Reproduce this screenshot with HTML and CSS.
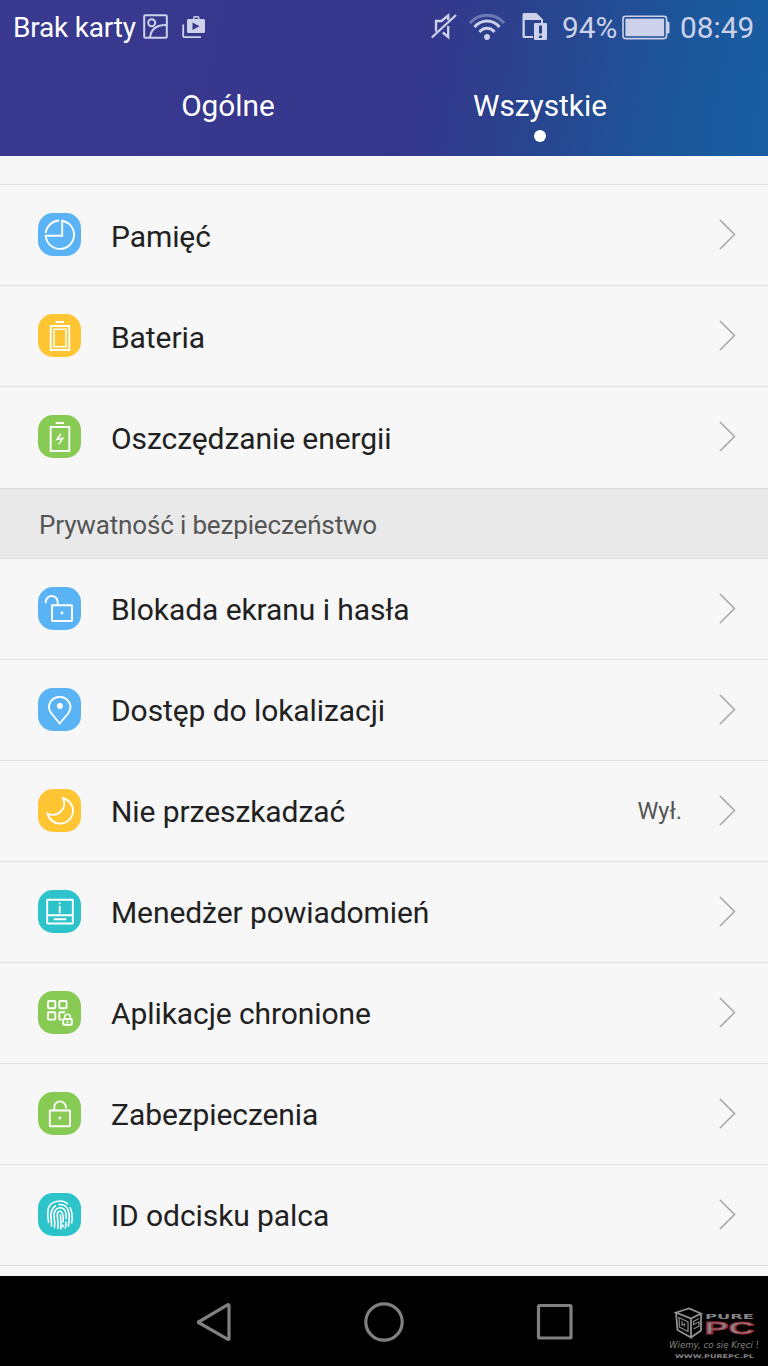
FILE: index.html
```
<!DOCTYPE html>
<html lang="pl">
<head>
    <meta charset="UTF-8">
    <meta name="viewport" content="width=device-width, initial-scale=1.0">
    <title>Ustawienia</title>
    <link rel="stylesheet" href="styles.css">
</head>
<body>

<header class="header">
    <div class="status">
        <span class="carrier">Brak karty</span>
        <svg class="status-image" width="25" height="25" viewBox="0 0 25 25" fill="none" stroke="currentColor" stroke-width="2">
            <rect x="1.2" y="1.2" width="22.6" height="22.6" rx="1"/>
            <circle cx="8.7" cy="8.8" r="3.5"/>
            <path d="M7 23.5C8 15 14 10.800 23.500 11"/>
        </svg>
        <svg class="status-store" width="24" height="23" viewBox="0 0 24 23">
            <path d="M1.200 8.500V20.300Q1.200 21.200 2.100 21.200H19" fill="none" stroke="currentColor" stroke-width="1.800"/>
            <path fill="currentColor" fill-rule="evenodd" d="M7 3H11V2Q11 0 13 0H15.500Q17.500 0 17.500 2V3H21.500Q23 3 23 4.500V15.500Q23 17 21.500 17H6.500Q5 17 5 15.500V4.500Q5 3 6.500 3ZM12.500 3H16V1.600H12.500ZM10.500 6.500V14L17.500 10.200Z"/>
        </svg>
        <div class="status-right">
            <svg class="status-mute" width="26" height="28" viewBox="0 0 26 28" fill="none" stroke="currentColor" stroke-width="2.300">
                <path d="M5 19.500V9H10.500L17.200 3.500V8M17.200 14V25L11.800 20.500"/>
                <path d="M0.800 25.500L25 3"/>
            </svg>
            <svg class="status-wifi" width="36" height="28" viewBox="0 0 36 28" fill="none" stroke="currentColor" stroke-width="3">
                <path d="M1 11C10 0.500 26 0.500 35 11" opacity="0.400"/>
                <path d="M5.500 15C12.500 7 23.500 7 30.500 15M10.500 20C14.500 15 21.500 15 25.500 20"/>
                <circle cx="18" cy="25" r="2.900" fill="currentColor" stroke="none"/>
            </svg>
            <svg class="status-sim" width="26" height="28" viewBox="0 0 26 28">
                <path fill="currentColor" d="M2 0H14.500L21 6.500V10H19V7H2.800V23H11V25H2Q0.500 25 0.500 23.500V1.500Q0.500 0 2 0Z"/>
                <path fill="currentColor" fill-rule="evenodd" d="M13 10H24Q25 10 25 11V26Q25 27 24 27H13Q12 27 12 26V11Q12 10 13 10ZM17 12.500V20.500H20V12.500ZM17 22.500V25H20V22.500Z"/>
            </svg>
            <span class="percent">94%</span>
            <svg class="status-battery" width="48" height="25" viewBox="0 0 48 25">
                <rect x="1" y="1.200" width="43.500" height="22.400" rx="2.500" fill="none" stroke="currentColor" stroke-width="1.600"/>
                <rect x="3.400" y="3.600" width="38.700" height="17.600" fill="currentColor"/>
                <path d="M45 6.500H46Q47.500 6.500 47.500 8V17Q47.500 18.500 46 18.500H45Z" fill="currentColor"/>
            </svg>
            <span class="clock">08:49</span>
        </div>
    </div>
    <nav class="tabs">
        <a class="tab">Ogólne</a>
        <a class="tab active">Wszystkie</a>
    </nav>
</header>

<main class="settings">
    <div class="spacer"></div>

    <div class="row">
        <svg class="icon blue" viewBox="0 0 43 43">
            <path d="M24.200 22.800V7.700A14.200 14.200 0 1 1 7.700 22.800Z"/>
            <path d="M7.700 19.800A14.200 14.200 0 0 1 21.200 7.500"/>
        </svg>
        <span class="label">Pamięć</span>
        <svg class="arrow" viewBox="0 0 17 31"><path d="M1 1L15.500 15.500L1 30"/></svg>
    </div>
    <div class="row">
        <svg class="icon yellow" viewBox="0 0 43 43">
            <path d="M17.700 8H26"/>
            <rect x="12.700" y="12" width="18.600" height="24"/>
            <rect class="thin" x="16" y="15.300" width="12" height="17.400"/>
        </svg>
        <span class="label">Bateria</span>
        <svg class="arrow" viewBox="0 0 17 31"><path d="M1 1L15.500 15.500L1 30"/></svg>
    </div>
    <div class="row last">
        <svg class="icon green" viewBox="0 0 43 43">
            <path d="M17.700 8H26"/>
            <rect x="12.700" y="12" width="18.600" height="24"/>
            <path class="thin" d="M23 18.800L19 24.300L24.800 23.200L20.800 29.200"/>
        </svg>
        <span class="label">Oszczędzanie energii</span>
        <svg class="arrow" viewBox="0 0 17 31"><path d="M1 1L15.500 15.500L1 30"/></svg>
    </div>

    <h2 class="section">Prywatność i bezpieczeństwo</h2>

    <div class="row">
        <svg class="icon blue" viewBox="0 0 43 43">
            <path d="M7.700 16.300V15A6 6 0 0 1 19.700 15V18"/>
            <rect x="14" y="18.300" width="20" height="15.700" rx="0.500"/>
            <circle class="dot" cx="24" cy="26" r="1.400"/>
        </svg>
        <span class="label">Blokada ekranu i hasła</span>
        <svg class="arrow" viewBox="0 0 17 31"><path d="M1 1L15.500 15.500L1 30"/></svg>
    </div>
    <div class="row">
        <svg class="icon blue" viewBox="0 0 43 43">
            <path d="M21.700 35.500L13.500 25.500C7.500 17.500 13.500 9 21.700 9S36 17.500 30 25.500Z"/>
            <circle class="dot" cx="21.900" cy="18" r="2.900"/>
        </svg>
        <span class="label">Dostęp do lokalizacji</span>
        <svg class="arrow" viewBox="0 0 17 31"><path d="M1 1L15.500 15.500L1 30"/></svg>
    </div>
    <div class="row">
        <svg class="icon yellow" viewBox="0 0 43 43">
            <path d="M25 9.200A12.900 12.900 0 1 1 9.500 24.600A11.500 11.500 0 0 0 25 9.200Z"/>
        </svg>
        <span class="label">Nie przeszkadzać</span>
        <span class="value">Wył.</span>
        <svg class="arrow" viewBox="0 0 17 31"><path d="M1 1L15.500 15.500L1 30"/></svg>
    </div>
    <div class="row">
        <svg class="icon teal" viewBox="0 0 43 43">
            <rect x="9.200" y="9.700" width="25.600" height="23.800" rx="0.500"/>
            <path d="M9 25.300H35M15.500 29.300H28.300M21.700 16V23.300M21.700 12.500V14.300"/>
        </svg>
        <span class="label">Menedżer powiadomień</span>
        <svg class="arrow" viewBox="0 0 17 31"><path d="M1 1L15.500 15.500L1 30"/></svg>
    </div>
    <div class="row">
        <svg class="icon green" viewBox="0 0 43 43">
            <rect x="10" y="10" width="7.300" height="7.300" rx="1"/>
            <rect x="21.300" y="10" width="7.300" height="7.300" rx="1"/>
            <rect x="10" y="21.300" width="7.300" height="7.300" rx="1"/>
            <path d="M23.500 28.600H22.300Q21.300 28.600 21.300 27.600V22.300Q21.300 21.300 22.300 21.300H27"/>
            <rect x="25.200" y="28" width="8.600" height="5.700" rx="0.800"/>
            <path class="thin" d="M26.700 28V26A2.800 2.800 0 0 1 32.300 26V28"/>
            <circle class="dot" cx="29.500" cy="30.800" r="1.100"/>
        </svg>
        <span class="label">Aplikacje chronione</span>
        <svg class="arrow" viewBox="0 0 17 31"><path d="M1 1L15.500 15.500L1 30"/></svg>
    </div>
    <div class="row">
        <svg class="icon green" viewBox="0 0 43 43">
            <path d="M16.300 18V15.200A5.800 5.800 0 0 1 27.900 15.200V16.500"/>
            <rect x="11.800" y="18.500" width="20.200" height="15.700" rx="0.500"/>
            <circle class="dot" cx="21.900" cy="26" r="1.400"/>
        </svg>
        <span class="label">Zabezpieczenia</span>
        <svg class="arrow" viewBox="0 0 17 31"><path d="M1 1L15.500 15.500L1 30"/></svg>
    </div>
    <div class="row">
        <svg class="icon teal finger" viewBox="0 0 43 43">
            <path d="M10.600 30Q9.500 24 9.800 19C10.200 11 16 8 22 8Q27 8 30 11.300"/>
            <path d="M32 14Q34.500 19 34.200 25Q34.200 28 33.500 30.500"/>
            <path d="M13.300 33.500Q13.800 30 13 25.500Q12.300 20 14.500 16Q16 13.500 18 12.600"/>
            <path d="M20.500 11.600Q27 10.800 29.700 16Q31.300 19.500 31.200 24.500Q31.200 30 30.200 33.800"/>
            <path d="M16.300 35Q17.300 30 16.300 25.500C15 18 18.500 14.800 22 14.800C26 14.800 28 18.500 28.200 23V26"/>
            <path d="M28 28.500Q28 32 27.200 35.500"/>
            <path d="M19.700 36Q20.700 30.500 19.500 25.500C18.700 20.500 19.700 18.200 22 18.200C24.500 18.200 25 22 25.200 25V29.500"/>
            <path d="M22.300 21.500Q23.500 29 22.800 36.300M25 31.500L24.700 34.500"/>
        </svg>
        <span class="label">ID odcisku palca</span>
        <svg class="arrow" viewBox="0 0 17 31"><path d="M1 1L15.500 15.500L1 30"/></svg>
    </div>
</main>

<footer class="navbar">
    <div class="nav-button">
        <svg width="40" height="44" viewBox="0 0 40 44"><path d="M4.500 22L33.500 4.800Q35 4 35 5.500V38.500Q35 40 33.500 39.200L4.500 22.500Z"/></svg>
    </div>
    <div class="nav-button">
        <svg width="44" height="44" viewBox="0 0 44 44"><circle cx="22" cy="22" r="18.200"/></svg>
    </div>
    <div class="nav-button">
        <svg width="44" height="44" viewBox="0 0 44 44"><rect x="6.500" y="5.500" width="32.500" height="32.500" rx="1"/></svg>
    </div>
    <svg class="watermark" width="102" height="62" viewBox="0 0 102 62">
        <path class="box" d="M10 10.500L23 6.500L35 11.500L25 16.500ZM10 10.500L11.500 28L25 35.500V16.500M35 11.500V28.500L25 35.500"/>
        <path class="box-detail" d="M13 15.500L22 20V29.500L13.500 25ZM33 16.500L27.500 19.500V22.500L33 20V24L27.500 27M16 19V23L18.500 22V24.500"/>
        <text class="pure" x="39" y="17.200" textLength="49" lengthAdjust="spacingAndGlyphs">PURE</text>
        <text class="pc" x="38.500" y="32.200" textLength="50" lengthAdjust="spacingAndGlyphs">PC</text>
        <text class="motto" x="3" y="46" textLength="90" lengthAdjust="spacingAndGlyphs">Wiemy, co się Kręci !</text>
        <text class="site" x="9" y="55.700" textLength="79" lengthAdjust="spacingAndGlyphs">WWW.PUREPC.PL</text>
    </svg>
</footer>

</body>
</html>
```
FILE: styles.css
```
* {
    box-sizing: border-box;
}
body {
    font-family: Roboto, sans-serif;
    margin: 0;
    height: 1366px;
    overflow: hidden;
    display: flex;
    flex-direction: column;
    background-color: #f7f7f7;
    color: #212121;
}
svg {
    display: block;
    flex: none;
}
.header {
    height: 155.6px;
    flex: none;
    background: linear-gradient(100deg, #38398f 0%, #35378c 54%, #28458f 70%, #1d559a 86%, #185fa2 100%);
    color: #ffffff;
}
.status {
    display: flex;
    height: 56px;
    padding: 0 14px 0 13px;
    font-size: 28px;
    line-height: 56px;
}
.status svg,
.status-right {
    color: #cdd2ea;
}
.carrier {
    width: 122px;
    letter-spacing: -0.2px;
    white-space: nowrap;
}
.status-image {
    margin: 14px 0 0 8px;
}
.status-store {
    margin: 16px 0 0 14px;
}
.status-right {
    display: flex;
    margin-left: auto;
    font-size: 29.8px;
}
.status-mute {
    margin: 12px 12px 0 0;
}
.status-wifi {
    margin: 12px 17px 0 0;
}
.status-sim {
    margin: 13px 14px 0 0;
}
.percent {
    width: 55px;
    white-space: nowrap;
}
.status-battery {
    margin: 15px 10px 0 5px;
}
.clock {
    width: 74px;
}
.tabs {
    display: flex;
    padding-left: 72px;
}
.tab {
    width: 312px;
    height: 99px;
    padding-top: 32px;
    text-align: center;
    font-size: 29.8px;
    line-height: 36px;
}
.tab.active::after {
    content: "";
    display: block;
    width: 12px;
    height: 12px;
    margin: 6px auto 0;
    border-radius: 50%;
    background-color: #ffffff;
}
.settings {
    flex: 1;
    overflow: hidden;
}
.spacer {
    height: 29.4px;
    border-bottom: 1px solid #dedede;
}
.row {
    display: flex;
    align-items: center;
    height: 101px;
    padding: 0 32px 1px 38px;
    border-bottom: 1px solid #dedede;
}
.row.last {
    border-bottom-color: transparent;
}
.section {
    height: 71px;
    margin: 0;
    padding-left: 39px;
    border-top: 1px solid #d9d9d9;
    border-bottom: 1px solid #dddddd;
    background-color: #e9e9e9;
    color: #555555;
    font-size: 26px;
    font-weight: 400;
    letter-spacing: -0.15px;
    line-height: 72px;
}
.icon {
    width: 43px;
    height: 43px;
    margin-right: 30px;
    border-radius: 15px;
    fill: none;
    stroke: #ffffff;
    stroke-width: 1.9;
}
.icon .thin {
    stroke-width: 1.5;
}
.icon .dot {
    fill: #ffffff;
    stroke: none;
}
.icon.finger {
    stroke-width: 1.6;
}
.blue {
    background-color: #5ab3f5;
}
.yellow {
    background-color: #ffc533;
}
.green {
    background-color: #87cb55;
}
.teal {
    background-color: #2cc3ca;
}
.label {
    flex: 1;
    padding-top: 5px;
    font-size: 30px;
    letter-spacing: -0.08px;
}
.section ~ .row .label {
    padding-top: 2px;
}
.value {
    margin-right: 37px;
    padding-top: 2px;
    color: #555555;
    font-size: 23.5px;
}
.arrow {
    width: 17px;
    height: 31px;
    fill: none;
    stroke: #a6a6a6;
    stroke-width: 1.5;
}
.navbar {
    position: relative;
    display: flex;
    justify-content: center;
    height: 90px;
    flex: none;
    background-color: #000000;
}
.nav-button {
    display: flex;
    align-items: center;
    justify-content: center;
    width: 170px;
    height: 92px;
    fill: none;
    stroke: #808080;
    stroke-width: 3.2;
}
.watermark {
    position: absolute;
    right: 0;
    bottom: 2px;
    overflow: visible;
    fill: #858585;
}
.box {
    fill: none;
    stroke: #929292;
    stroke-width: 1.8;
}
.box-detail {
    fill: none;
    stroke: #808080;
    stroke-width: 1.3;
}
.pure {
    font: bold 7px "DejaVu Sans", sans-serif;
}
.pc {
    font: bold 16px "Liberation Sans", sans-serif;
    stroke: #a02a3c;
    stroke-width: 0.8;
}
.motto {
    font: italic 9px "DejaVu Sans", sans-serif;
}
.site {
    font: bold 5px "DejaVu Sans", sans-serif;
}
```
